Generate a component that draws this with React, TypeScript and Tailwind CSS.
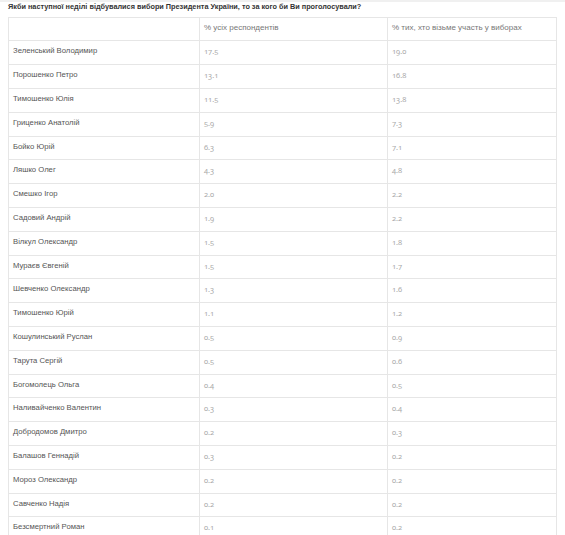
const rows: [string, string, string][] = [
  ["Зеленський Володимир", "17.5", "19.0"],
  ["Порошенко Петро", "13.1", "16.8"],
  ["Тимошенко Юлія", "11.5", "13.8"],
  ["Гриценко Анатолій", "5.9", "7.3"],
  ["Бойко Юрій", "6.3", "7.1"],
  ["Ляшко Олег", "4.3", "4.8"],
  ["Смешко Ігор", "2.0", "2.2"],
  ["Садовий Андрій", "1.9", "2.2"],
  ["Вілкул Олександр", "1.5", "1.8"],
  ["Мураєв Євгеній", "1.5", "1.7"],
  ["Шевченко Олександр", "1.3", "1.6"],
  ["Тимошенко Юрій", "1.1", "1.2"],
  ["Кошулинський Руслан", "0.5", "0.9"],
  ["Тарута Сергій", "0.5", "0.6"],
  ["Богомолець Ольга", "0.4", "0.5"],
  ["Наливайченко Валентин", "0.3", "0.4"],
  ["Добродомов Дмитро", "0.2", "0.3"],
  ["Балашов Геннадій", "0.3", "0.2"],
  ["Мороз Олександр", "0.2", "0.2"],
  ["Савченко Надія", "0.2", "0.2"],
  ["Безсмертний Роман", "0.1", "0.2"],
];

const cell = "h-[23.8px] border-r border-b border-[#e6e6e6] pl-[4px] pt-[4px] leading-[12px] truncate";
const num = `${cell} text-[7.5px] text-[#aaa] font-['Noto_Sans',sans-serif] oldstyle-nums`;

export default function App() {
  return (
    <div className="min-h-screen bg-white font-['Liberation_Sans',Arial,sans-serif]">
      <div className="h-[2px] bg-[#f0f0f0]" />
      <div className="px-[8px]">
        <div className="h-[14.7px] text-[7.3px] leading-[10px] font-bold text-[#333]">
          Якби наступної неділі відбувалися вибори Президента України, то за кого би Ви проголосували?
        </div>

        <div className="grid grid-cols-[191px_188px_169px] border-l border-t border-[#e6e6e6]">
          <div className={cell}></div>
          <div className={`${cell} text-[8px] text-[#777]`}>% усіх респондентів</div>
          <div className={`${cell} text-[8px] text-[#777]`}>% тих, хто візьме участь у виборах</div>

          {rows.map(([name, a, b]) => (
            <div key={name} className="contents">
              <div className={`${cell} text-[7.7px] text-[#555]`}>{name}</div>
              <div className={num}>{a}</div>
              <div className={num}>{b}</div>
            </div>
          ))}
        </div>
      </div>
    </div>
  );
}
